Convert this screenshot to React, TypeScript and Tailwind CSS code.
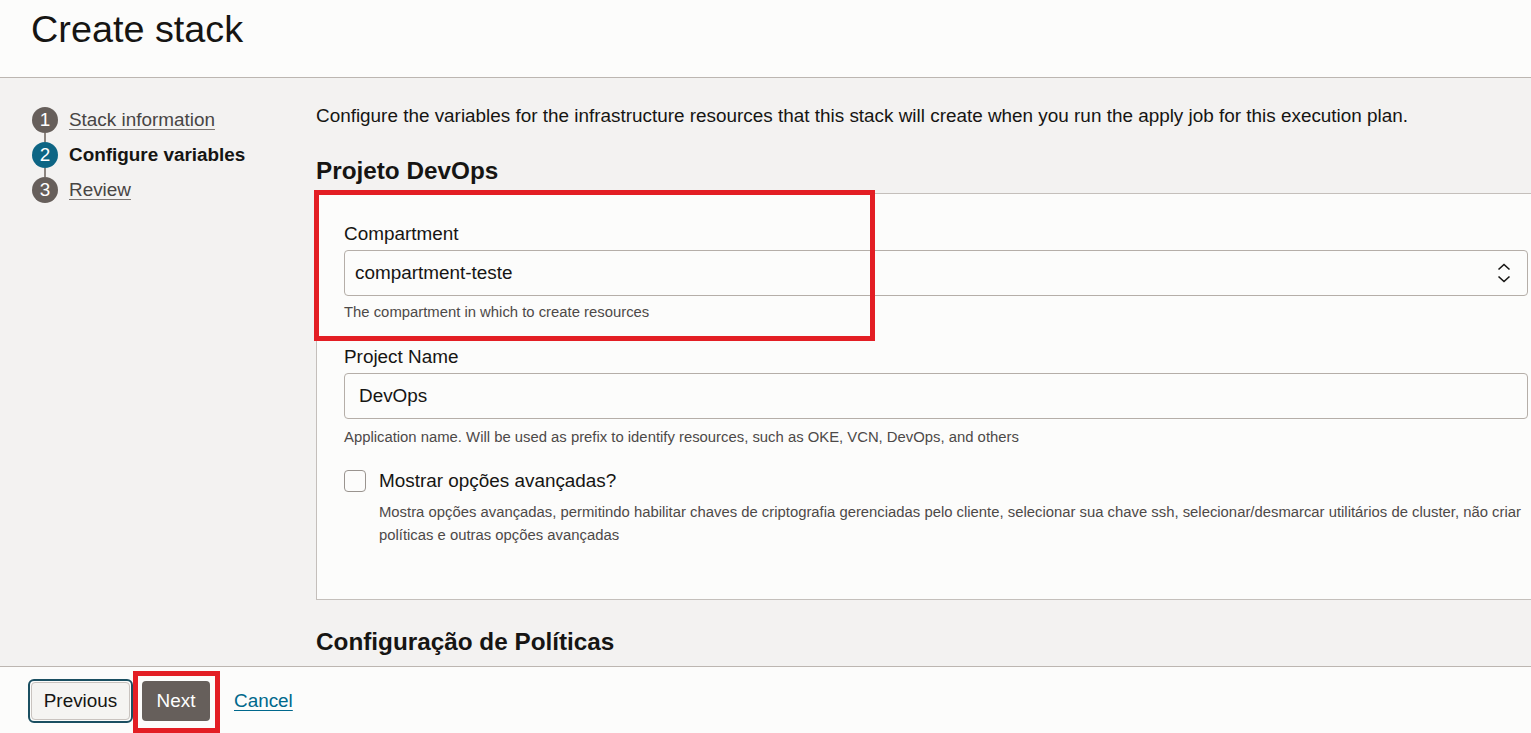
import React from "react";

const steps = [
  { n: 1, label: "Stack information", state: "done" },
  { n: 2, label: "Configure variables", state: "current" },
  { n: 3, label: "Review", state: "todo" },
];

function UpDownIcon() {
  return (
    <svg width="16" height="22" viewBox="0 0 16 22" fill="none" stroke="#161513" strokeWidth="1.6">
      <polyline points="2.5,7.5 8,2.5 13.5,7.5" />
      <polyline points="2.5,14.5 8,19.5 13.5,14.5" />
    </svg>
  );
}

export default function App() {
  return (
    <div className="h-screen flex flex-col bg-[#f3f2f1] text-[#161513] overflow-hidden font-['Liberation_Sans',Arial,sans-serif]">
      {/* Header */}
      <header className="h-[78px] shrink-0 bg-[#fcfcfb] border-b border-[#bcb6b1] pl-[31px] pt-[7px]">
        <h1 className="text-[37.8px] leading-[44px] font-normal">Create stack</h1>
      </header>

      {/* Body */}
      <div className="flex-1 min-h-0 flex overflow-hidden">
        {/* Steps */}
        <nav className="w-[316px] shrink-0 pl-[32px] pt-[29px]">
          {steps.map((s, i) => (
            <div key={s.n}>
              {i > 0 && <div className="ml-[12px] w-[2px] h-[9px] bg-[#8c8580]" />}
              <div className="flex items-center gap-[11px] h-[26px]">
                <span
                  className={
                    s.state === "current"
                      ? "w-[26px] h-[26px] rounded-full bg-[#0d6584] text-white text-[18.9px] flex items-center justify-center"
                      : "w-[26px] h-[26px] rounded-full bg-[#665f5b] text-white text-[18.9px] flex items-center justify-center"
                  }
                >
                  {s.n}
                </span>
                {s.state === "current" ? (
                  <span className="text-[18.9px] font-bold">{s.label}</span>
                ) : (
                  <a href="#" className="text-[18.9px] text-[#484544] underline underline-offset-[3px] decoration-[#7a7471]">
                    {s.label}
                  </a>
                )}
              </div>
            </div>
          ))}
        </nav>

        {/* Form content */}
        <main className="flex-1 min-w-0 pt-[27px] mr-[-25px]">
          <p className="text-[18.9px] leading-[22px]">
            Configure the variables for the infrastructure resources that this stack will create when you run the apply job for this execution plan.
          </p>
          <h2 className="mt-[30px] text-[24.3px] leading-[28px] font-bold">Projeto DevOps</h2>

          <section className="relative mt-[8px] bg-[#fcfcfb] border border-[#c4bfbb] px-[27px] pt-[29px] pb-[52px]">
            <div className="absolute left-[-3px] top-[-4px] w-[561px] h-[151px] border-[5px] border-[#e31e24] pointer-events-none" />

            <label className="block text-[18.9px] leading-[22px]">Compartment</label>
            <div className="mt-[5px] h-[46px] border border-[#b5aea8] rounded-[4px] bg-[#fcfcfb] flex items-center justify-between pl-[10px] pr-[15px]">
              <span className="text-[18.9px]">compartment-teste</span>
              <UpDownIcon />
            </div>
            <p className="mt-[7px] text-[14.85px] leading-[18px] text-[#4d4948]">The compartment in which to create resources</p>

            <label className="block mt-[25px] text-[18.9px] leading-[22px]">Project Name</label>
            <div className="mt-[5px] h-[46px] border border-[#b5aea8] rounded-[4px] bg-[#fcfcfb] flex items-center pl-[14px]">
              <span className="text-[18.9px]">DevOps</span>
            </div>
            <p className="mt-[9px] text-[14.85px] leading-[18px] text-[#4d4948]">
              Application name. Will be used as prefix to identify resources, such as OKE, VCN, DevOps, and others
            </p>

            <div className="mt-[23px] flex gap-[13px]">
              <span className="mt-[1px] w-[22px] h-[22px] shrink-0 rounded-[4px] border border-[#9a948f] bg-[#fcfcfb]" />
              <div>
                <div className="text-[18.9px] leading-[24px]">Mostrar opções avançadas?</div>
                <p className="mt-[8px] text-[14.85px] leading-[23px] text-[#4d4948]">
                  Mostra opções avançadas, permitindo habilitar chaves de criptografia gerenciadas pelo cliente, selecionar sua chave ssh, selecionar/desmarcar utilitários de cluster, não criar políticas e outras opções avançadas
                </p>
              </div>
            </div>
          </section>

          <h2 className="mt-[28px] text-[24.3px] leading-[28px] font-bold">Configuração de Políticas</h2>
          <section className="mt-[10px] h-[200px] bg-[#fcfcfb] border border-[#c4bfbb]" />
        </main>
      </div>

      {/* Footer */}
      <footer className="h-[67px] shrink-0 bg-[#fcfcfb] border-t border-[#bcb6b1] pl-[28px] pt-[12px]">
        <div className="flex items-center">
          <button className="h-[44px] w-[105px] rounded-[6px] border-2 border-[#1b4f61] p-[1px]">
            <span className="h-full w-full rounded-[4px] border border-[#c9c3bf] bg-[#f5f4f2] text-[18.9px] text-[#161513] flex items-center justify-center">
              Previous
            </span>
          </button>
          <div className="relative ml-[9px]">
            <div className="absolute left-[-9px] top-[-10px] w-[87px] h-[62px] border-[5px] border-[#e31e24] pointer-events-none" />
            <button className="h-[40px] w-[68px] rounded-[4px] bg-[#665f5b] text-white text-[18.9px]">Next</button>
          </div>
          <a href="#" className="ml-[24px] text-[18.9px] text-[#00688c] underline underline-offset-[3px]">
            Cancel
          </a>
        </div>
      </footer>
    </div>
  );
}
